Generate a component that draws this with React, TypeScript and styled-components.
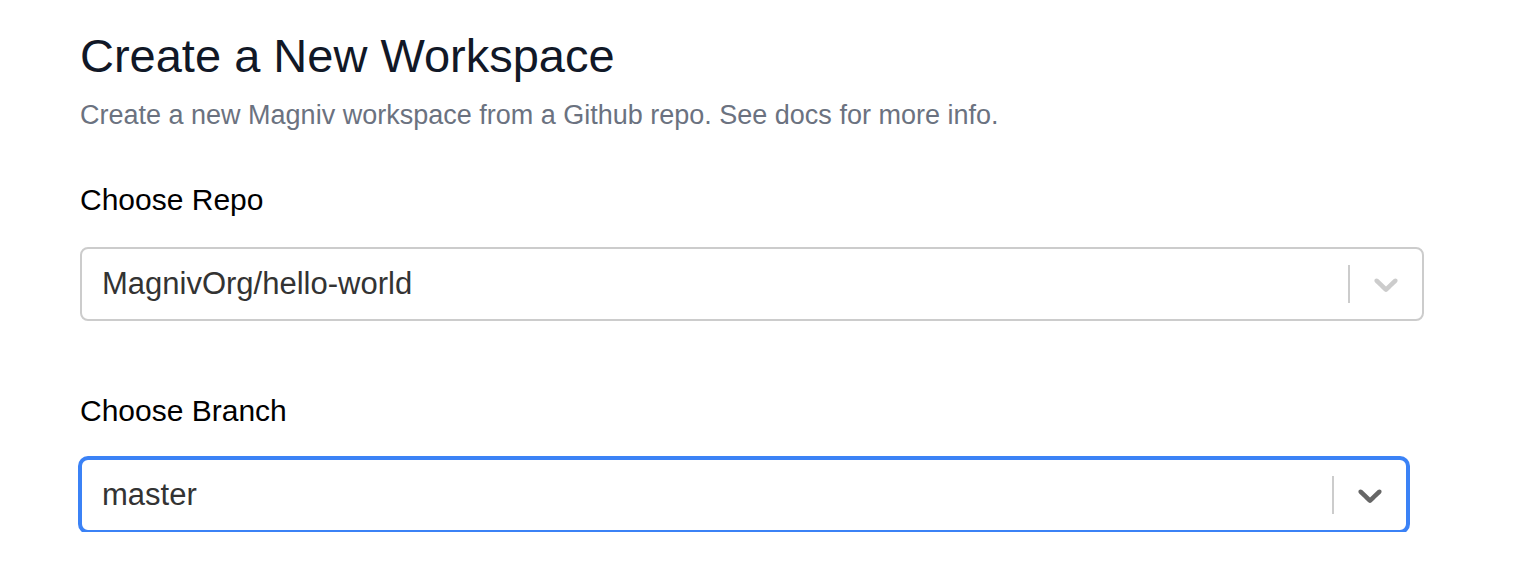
import styled, { createGlobalStyle } from "styled-components";

const GlobalStyle = createGlobalStyle`
  body {
    margin: 0;
    background: #ffffff;
    font-family: "Liberation Sans", Arial, sans-serif;
  }
`;

const Page = styled.div`
  padding: 24px 0 0 80px;
  width: 1344px;
`;

const Title = styled.h1`
  font-size: 47px;
  font-weight: 400;
  line-height: 64px;
  color: #111827;
  margin: 0;
`;

const Subtitle = styled.p`
  font-size: 27px;
  line-height: 40px;
  color: #6b7280;
  margin: 7px 0 0;
`;

const Field = styled.div<{ width: number; gap: number }>`
  width: ${(props) => props.width}px;
  margin-top: ${(props) => props.gap}px;
`;

const Label = styled.div`
  font-size: 30px;
  line-height: 40px;
  color: #000000;
  margin-bottom: 27px;
`;

const Control = styled.div<{ focused?: boolean }>`
  height: 74px;
  box-sizing: border-box;
  display: flex;
  align-items: center;
  border: 2px solid ${(props) => (props.focused ? "#3b82f6" : "#cccccc")};
  box-shadow: ${(props) => (props.focused ? "0 0 0 2px #3b82f6" : "none")};
  border-radius: 8px;
  background: #ffffff;
`;

const Value = styled.div`
  flex: 1;
  padding-left: 20px;
  font-size: 31px;
  color: #333333;
`;

const Separator = styled.span`
  width: 2px;
  align-self: stretch;
  margin: 16px 0;
  background: #cccccc;
`;

const Indicator = styled.div<{ focused?: boolean }>`
  width: 72px;
  display: flex;
  justify-content: center;
  color: ${(props) => (props.focused ? "#666666" : "#cccccc")};
`;

const Chevron = () => (
  <svg width="40" height="40" viewBox="0 0 20 20" fill="currentColor">
    <path d="M4.516 7.548c0.436-0.446 1.043-0.481 1.576 0l3.908 3.747 3.908-3.747c0.533-0.481 1.141-0.446 1.574 0 0.436 0.445 0.408 1.197 0 1.615-0.406 0.418-4.695 4.502-4.695 4.502-0.217 0.223-0.502 0.335-0.787 0.335s-0.57-0.112-0.789-0.335c0 0-4.287-4.084-4.695-4.502s-0.436-1.17 0-1.615z" />
  </svg>
);

const Select = ({ value, focused }: { value: string; focused?: boolean }) => (
  <Control focused={focused}>
    <Value>{value}</Value>
    <Separator />
    <Indicator focused={focused}>
      <Chevron />
    </Indicator>
  </Control>
);

const App = () => {
  return (
    <>
      <GlobalStyle />
      <Page>
        <Title>Create a New Workspace</Title>
        <Subtitle>
          Create a new Magniv workspace from a Github repo. See docs for more info.
        </Subtitle>
        <Field width={1344} gap={45}>
          <Label>Choose Repo</Label>
          <Select value="MagnivOrg/hello-world" />
        </Field>
        <Field width={1328} gap={70}>
          <Label>Choose Branch</Label>
          <Select value="master" focused />
        </Field>
      </Page>
    </>
  );
};
export default App;
